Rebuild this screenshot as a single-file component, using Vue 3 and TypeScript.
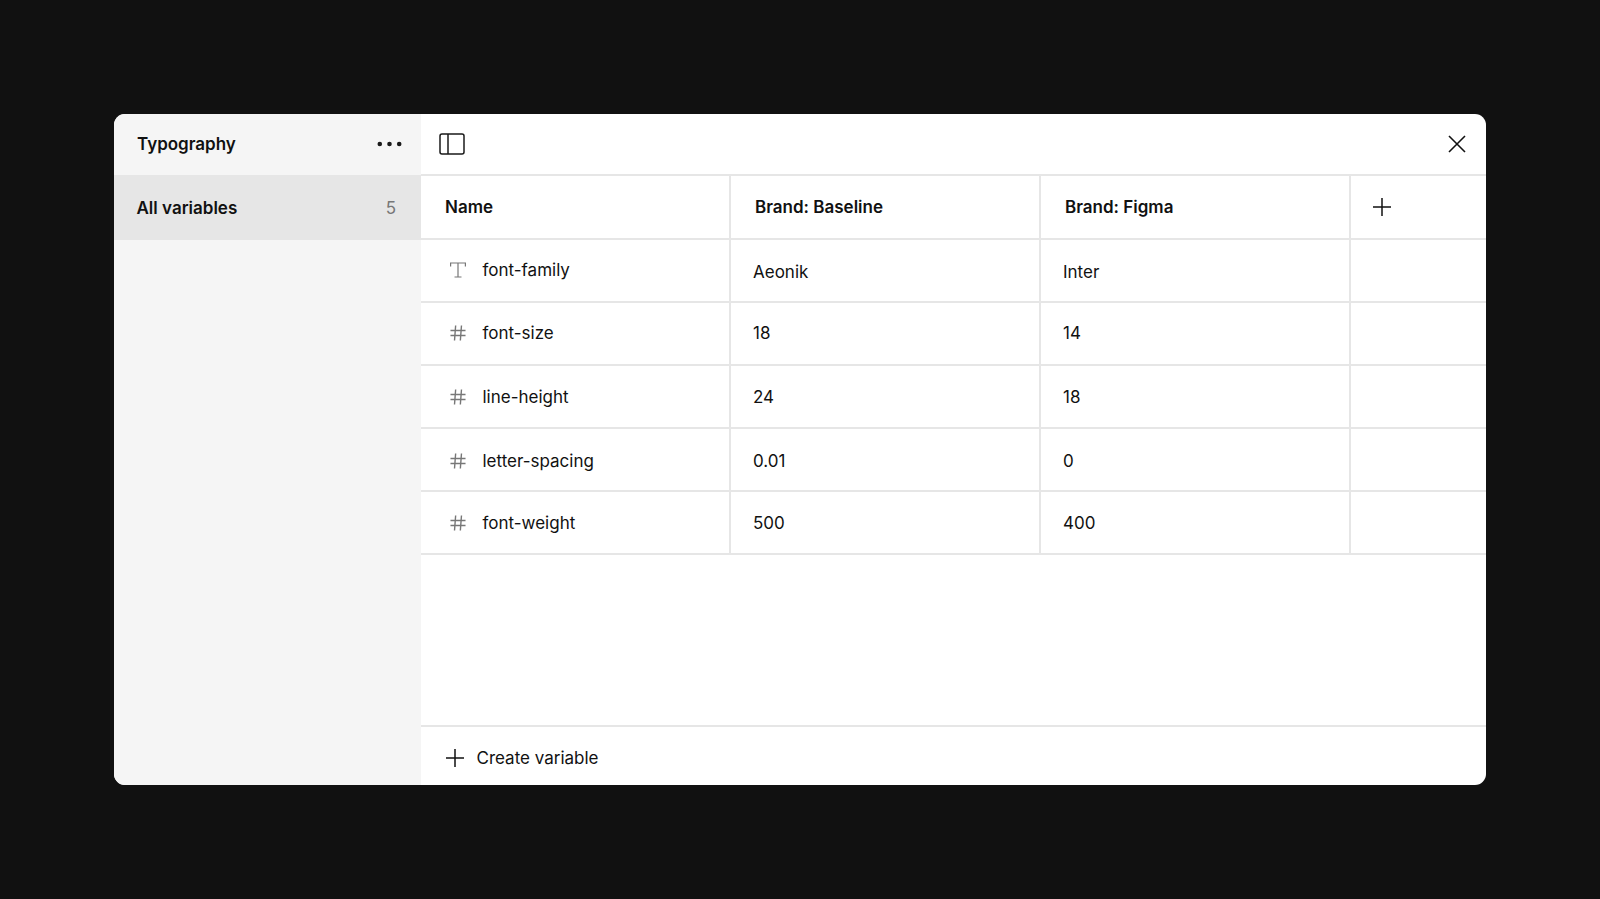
<script setup lang="ts">
interface Variable {
  name: string
  type: 'text' | 'number'
  baseline: string
  figma: string
  // the source mock's rows aren't quite centred
  nudge?: 'up' | 'down' | 'mixed'
}

const variables: Variable[] = [
  { name: 'font-family', type: 'text', baseline: 'Aeonik', figma: 'Inter', nudge: 'mixed' },
  { name: 'font-size', type: 'number', baseline: '18', figma: '14', nudge: 'up' },
  { name: 'line-height', type: 'number', baseline: '24', figma: '18' },
  { name: 'letter-spacing', type: 'number', baseline: '0.01', figma: '0', nudge: 'down' },
  { name: 'font-weight', type: 'number', baseline: '500', figma: '400' }
]
</script>

<template>
  <div class="page">
    <div class="modal">
      <aside class="sidebar">
        <div class="side-head">
          <span class="side-title">Typography</span>
          <svg class="dots" width="25" height="6" viewBox="0 0 25 6">
            <circle cx="2.8" cy="3" r="2.3" />
            <circle cx="12.5" cy="3" r="2.3" />
            <circle cx="22.2" cy="3" r="2.3" />
          </svg>
        </div>
        <div class="collection">
          <span class="collection-name">All variables</span>
          <span class="count">5</span>
        </div>
      </aside>

      <main class="content">
        <div class="toolbar">
          <svg width="26" height="22" viewBox="0 0 26 22" fill="none" stroke="#1a1a1a" stroke-width="1.5">
            <rect x="1" y="1" width="24" height="20" rx="2" />
            <path d="M9 1v20" />
          </svg>
          <svg width="20" height="20" viewBox="0 0 20 20" fill="none" stroke="#111" stroke-width="1.6">
            <path d="M2 2l16 16M18 2L2 18" />
          </svg>
        </div>

        <div class="row head">
          <div class="cell name-cell">Name</div>
          <div class="cell">Brand: Baseline</div>
          <div class="cell">Brand: Figma</div>
          <div class="cell add-cell">
            <svg width="20" height="20" viewBox="0 0 20 20" fill="none" stroke="#111" stroke-width="1.5">
              <path d="M10 1v18M1 10h18" />
            </svg>
          </div>
        </div>

        <div v-for="item in variables" :key="item.name" class="row" :class="item.nudge">
          <div class="cell var-name">
            <svg v-if="item.type === 'text'" class="type-icon" width="16" height="16" viewBox="0 0 16 16" fill="none" stroke="#777" stroke-width="1.2">
              <path d="M0.6 4.5V1h14.8v3.5M8 1v14M4.5 15h7" />
            </svg>
            <svg v-else class="type-icon" width="16" height="16" viewBox="0 0 17 17" fill="none" stroke="#777" stroke-width="1.5">
              <path d="M6 0.5L4.8 16.5M12.2 0.5L11 16.5M0.5 5.8h16M0.5 11.2h16" />
            </svg>
            <span>{{ item.name }}</span>
          </div>
          <div class="cell value">{{ item.baseline }}</div>
          <div class="cell value">{{ item.figma }}</div>
          <div class="cell"></div>
        </div>

        <div class="footer">
          <svg width="18" height="18" viewBox="0 0 18 18" fill="none" stroke="#111" stroke-width="1.5">
            <path d="M9 0v18M0 9h18" />
          </svg>
          <span>Create variable</span>
        </div>
      </main>
    </div>
  </div>
</template>

<style>
body {
  background: #111111;
}
</style>

<style scoped>
.page {
  height: 899px;
  padding: 114px 114px 0;
  box-sizing: border-box;
  background: #111111;
  font-family: Inter, "Liberation Sans", sans-serif;
  color: #111;
  font-size: 17px;
}

.modal {
  display: flex;
  height: 671px;
  border-radius: 11px;
  overflow: hidden;
  background: #fff;
}

.sidebar {
  width: 307px;
  flex: none;
  background: #f5f5f5;
}

.side-head {
  height: 61px;
  padding: 0 19px 2px 23px;
  box-sizing: border-box;
  display: flex;
  align-items: center;
  justify-content: space-between;
}

.side-title {
  font-weight: 600;
}

.dots {
  fill: #1a1a1a;
}

.collection {
  height: 65px;
  padding: 0 25px 0 22.5px;
  display: flex;
  align-items: center;
  justify-content: space-between;
  background: #e6e6e6;
  font-weight: 600;
}

.count {
  font-weight: 400;
  color: #777;
}

.content {
  flex: 1;
  display: flex;
  flex-direction: column;
  min-width: 0;
}

.toolbar {
  height: 60px;
  padding: 0 19px 0 17.5px;
  flex: none;
  display: flex;
  align-items: center;
  justify-content: space-between;
  border-bottom: 2px solid #e6e6e6;
}

.row {
  display: grid;
  grid-template-columns: 310px 310px 310px 1fr;
  height: 63px;
  flex: none;
  box-sizing: border-box;
  border-bottom: 2px solid #e6e6e6;
}

.row.head {
  height: 64px;
}

.cell {
  display: flex;
  align-items: center;
  border-right: 2px solid #e6e6e6;
  padding-left: 22px;
}

.cell:last-child {
  border-right: none;
}

.head .cell {
  font-weight: 600;
  padding-left: 24px;
}

.head .add-cell {
  padding-left: 21px;
}

.var-name {
  gap: 17px;
  padding-left: 28.5px;
}

.type-icon {
  flex: none;
}

.up .cell {
  padding-bottom: 2px;
}

.down .cell {
  padding-top: 2px;
}

.mixed .var-name {
  padding-bottom: 2px;
}

.mixed .value {
  padding-top: 3px;
}

.footer {
  margin-top: auto;
  height: 60px;
  flex: none;
  display: flex;
  align-items: center;
  gap: 13px;
  padding: 3px 0 0 24.5px;
  box-sizing: border-box;
  border-top: 2px solid #e6e6e6;
}
</style>
